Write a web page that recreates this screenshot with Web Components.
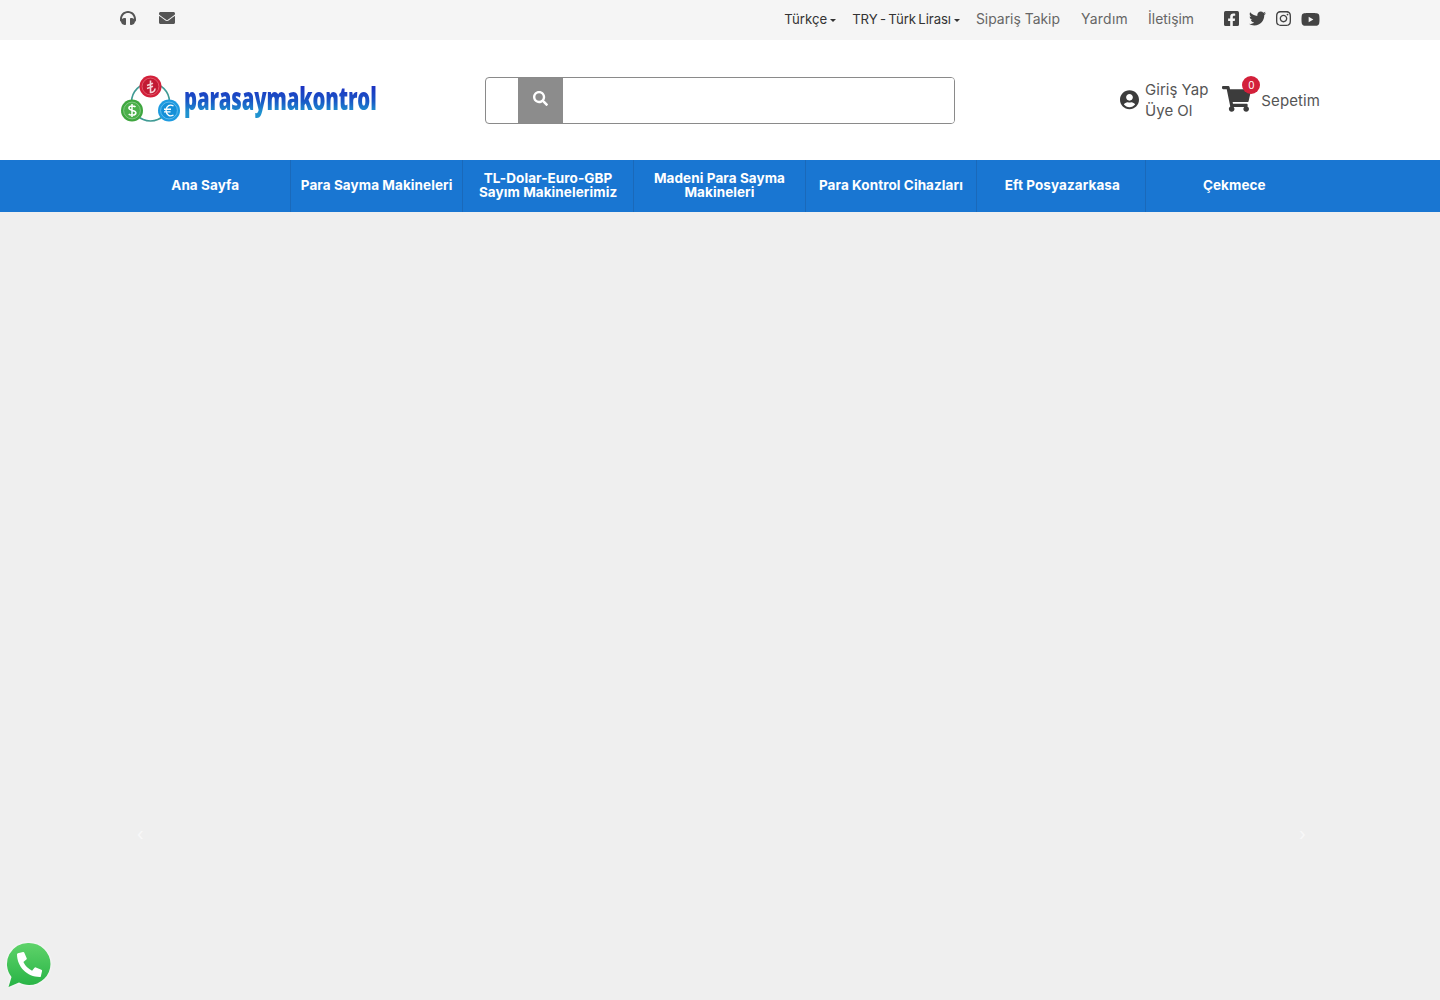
<!DOCTYPE html>
<html lang="tr"><head><meta charset="utf-8"><title>parasaymakontrol</title>
<style>
html,body{margin:0;padding:0;height:1000px;overflow:hidden;background:#efefef;font-family:Inter,"Noto Sans",sans-serif}
</style></head><body>
<site-topbar></site-topbar>
<site-header></site-header>
<site-nav></site-nav>
<site-hero></site-hero>
<whatsapp-button></whatsapp-button>
<script>
const P={
search:[512,'M505 442.7L405.3 343c-4.5-4.5-10.6-7-17-7H372c27.6-35.3 44-79.7 44-128C416 93.1 322.9 0 208 0S0 93.1 0 208s93.1 208 208 208c48.3 0 92.7-16.4 128-44v16.3c0 6.4 2.5 12.5 7 17l99.7 99.7c9.4 9.4 24.6 9.4 33.9 0l28.3-28.3c9.4-9.4 9.4-24.6.1-34zM208 336c-70.7 0-128-57.2-128-128 0-70.7 57.2-128 128-128 70.7 0 128 57.2 128 128 0 70.7-57.2 128-128 128z'],
envelope:[512,'M502.3 190.8c3.9-3.1 9.7-.2 9.7 4.7V400c0 26.5-21.5 48-48 48H48c-26.5 0-48-21.5-48-48V195.6c0-5 5.7-7.8 9.7-4.7 22.4 17.4 52.1 39.5 154.1 113.6 21.1 15.4 56.7 47.8 92.2 47.6 35.7.3 72-32.8 92.3-47.6 102-74.1 131.6-96.3 154-113.7zM256 320c23.2.4 56.6-29.2 73.4-41.4 132.7-96.3 142.8-104.7 173.4-128.7 5.8-4.5 9.2-11.5 9.2-18.9v-19c0-26.5-21.5-48-48-48H48C21.5 64 0 85.5 0 112v19c0 7.4 3.4 14.3 9.2 18.9 30.6 23.9 40.7 32.4 173.4 128.7 16.8 12.2 50.2 41.8 73.4 41.4z'],
headphones:[512,'M256 32C114.52 32 0 146.496 0 288v48a32 32 0 0 0 17.689 28.622l14.383 7.191C34.083 431.903 83.421 480 144 480h24c13.255 0 24-10.745 24-24V280c0-13.255-10.745-24-24-24h-24c-31.342 0-59.671 12.879-80 33.627V288c0-105.869 86.131-192 192-192s192 86.131 192 192v1.627C427.671 268.879 399.342 256 368 256h-24c-13.255 0-24 10.745-24 24v176c0 13.255 10.745 24 24 24h24c60.579 0 109.917-48.098 111.928-108.187l14.382-7.191A32 32 0 0 0 512 336v-48c0-141.504-114.52-256-256-256z'],
user:[496,'M248 8C111 8 0 119 0 256s111 248 248 248 248-111 248-248S385 8 248 8zm0 96c48.6 0 88 39.4 88 88s-39.4 88-88 88-88-39.4-88-88 39.4-88 88-88zm0 344c-58.7 0-111.3-26.6-146.5-68.2 18.8-35.4 55.6-59.8 98.5-59.8 2.4 0 4.8.4 7.1 1.1 13 4.2 26.6 6.9 40.9 6.9 14.3 0 28-2.7 40.9-6.9 2.3-.7 4.7-1.1 7.1-1.1 42.9 0 79.7 24.4 98.5 59.8C359.3 421.4 306.7 448 248 448z'],
cart:[576,'M528.12 301.319l47.273-208C578.806 78.301 567.391 64 551.99 64H159.208l-9.166-44.81C147.758 8.021 137.93 0 126.529 0H24C10.745 0 0 10.745 0 24v16c0 13.255 10.745 24 24 24h69.883l70.248 343.435C147.325 417.1 136 435.222 136 456c0 30.928 25.072 56 56 56s56-25.072 56-56c0-15.674-6.447-29.835-16.824-40h209.647C430.447 426.165 424 440.326 424 456c0 30.928 25.072 56 56 56s56-25.072 56-56c0-22.172-12.888-41.332-31.579-50.405l5.517-24.276c3.413-15.018-8.002-29.319-23.403-29.319H218.117l-6.545-32h293.145c11.206 0 20.92-7.754 23.403-18.681z'],
facebook:[448,'M400 32H48A48 48 0 0 0 0 80v352a48 48 0 0 0 48 48h137.25V327.69h-63V256h63v-54.64c0-62.15 37-96.48 93.67-96.48 27.14 0 55.52 4.84 55.52 4.84v61h-31.27c-30.81 0-40.42 19.12-40.42 38.73V256h68.78l-11 71.69h-57.78V480H400a48 48 0 0 0 48-48V80a48 48 0 0 0-48-48z'],
twitter:[512,'M459.37 151.716c.325 4.548.325 9.097.325 13.645 0 138.72-105.583 298.558-298.558 298.558-59.452 0-114.68-17.219-161.137-47.106 8.447.974 16.568 1.299 25.34 1.299 49.055 0 94.213-16.568 130.274-44.832-46.132-.975-84.792-31.188-98.112-72.772 6.498.974 12.995 1.624 19.818 1.624 9.421 0 18.843-1.3 27.614-3.573-48.081-9.747-84.143-51.98-84.143-102.985v-1.299c13.969 7.797 30.214 12.67 47.431 13.319-28.264-18.843-46.781-51.005-46.781-87.391 0-19.492 5.197-37.36 14.294-52.954 51.655 63.675 129.3 105.258 216.365 109.807-1.624-7.797-2.599-15.918-2.599-24.04 0-57.828 46.782-104.934 104.934-104.934 30.213 0 57.502 12.67 76.67 33.137 23.715-4.548 46.456-13.32 66.599-25.34-7.798 24.366-24.366 44.833-46.132 57.827 21.117-2.273 41.584-8.122 60.426-16.243-14.292 20.791-32.161 39.308-52.628 54.253z'],
instagram:[448,'M224.1 141c-63.6 0-114.9 51.3-114.9 114.9s51.3 114.9 114.9 114.9S339 319.5 339 255.9 287.7 141 224.1 141zm0 189.6c-41.1 0-74.7-33.5-74.7-74.7s33.5-74.7 74.7-74.7 74.7 33.5 74.7 74.7-33.6 74.7-74.7 74.7zm146.4-194.3c0 14.9-12 26.8-26.8 26.8-14.9 0-26.8-12-26.8-26.8s12-26.8 26.8-26.8 26.8 12 26.8 26.8zm76.1 27.2c-1.7-35.9-9.9-67.7-36.2-93.9-26.2-26.2-58-34.4-93.9-36.2-37-2.1-147.9-2.1-184.9 0-35.8 1.7-67.6 9.9-93.9 36.1s-34.4 58-36.2 93.9c-2.1 37-2.1 147.9 0 184.9 1.7 35.9 9.9 67.7 36.2 93.9s58 34.4 93.9 36.2c37 2.1 147.9 2.1 184.9 0 35.9-1.7 67.7-9.9 93.9-36.2 26.2-26.2 34.4-58 36.2-93.9 2.1-37 2.1-147.8 0-184.8zM398.8 388c-7.8 19.6-22.9 34.7-42.6 42.6-29.5 11.7-99.5 9-132.1 9s-102.7 2.6-132.1-9c-19.6-7.8-34.7-22.9-42.6-42.6-11.7-29.5-9-99.5-9-132.1s-2.6-102.7 9-132.1c7.8-19.6 22.9-34.7 42.6-42.6 29.5-11.7 99.5-9 132.1-9s102.7-2.6 132.1 9c19.6 7.8 34.7 22.9 42.6 42.6 11.7 29.5 9 99.5 9 132.1s2.7 102.7-9 132.1z'],
youtube:[576,'M549.655 124.083c-6.281-23.65-24.787-42.276-48.284-48.597C458.781 64 288 64 288 64S117.22 64 74.629 75.486c-23.497 6.322-42.003 24.947-48.284 48.597-11.412 42.867-11.412 132.305-11.412 132.305s0 89.438 11.412 132.305c6.281 23.65 24.787 41.5 48.284 47.821C117.22 448 288 448 288 448s170.78 0 213.371-11.486c23.497-6.321 42.003-24.171 48.284-47.821 11.412-42.867 11.412-132.305 11.412-132.305s0-89.438-11.412-132.305zm-317.51 213.508V175.185l142.739 81.205-142.739 81.201z']
};
const ic=(n,w,c)=>`<svg width="${w}" height="${w*512/P[n][0]}" viewBox="0 0 ${P[n][0]} 512" fill="${c}" style="display:block;flex:none" aria-hidden="true"><path d="${P[n][1]}"/></svg>`;
class Base extends HTMLElement{
  connectedCallback(){ if(!this.shadowRoot){this.attachShadow({mode:'open'}).innerHTML=this.markup();} }
}
class SiteTopbar extends Base{markup(){return `<style>
:host{display:block;height:40px;background:#f5f5f5}
.w{width:1200px;margin:0 auto;height:40px;display:flex;align-items:center;font-size:13.9px;color:#666}
.l{display:flex;gap:23px;margin-top:-4px}
.r{margin-left:auto;display:flex;align-items:center}
.r>span{position:relative;top:-1px}
.d{color:#333;font-size:13.2px;display:flex;align-items:center;gap:3px;margin-right:16px}
.d.n{word-spacing:-1.2px;letter-spacing:-.1px}
.d i{width:0;height:0;border:3px solid transparent;border-top-color:#333;border-bottom:0;margin-top:2px}
.a{margin-right:20px}
.a.first{margin-right:21px}
.a.y{letter-spacing:.3px}
.s{display:flex;align-items:center;gap:10px;margin-left:10px;margin-top:-2px}
</style><div class="w"><div class="l">${ic('headphones',16,'#555')}${ic('envelope',16,'#555')}</div>
<div class="r"><span class="d">Türkçe<i></i></span><span class="d n">TRY - Türk Lirası<i></i></span><span class="a first">Sipariş Takip</span><span class="a y">Yardım</span><span class="a">İletişim</span>
<div class="s">${ic('facebook',15,'#444')}${ic('twitter',17,'#444')}${ic('instagram',15,'#444')}${ic('youtube',19,'#444')}</div></div></div>`}}
class BrandLogo extends Base{markup(){return `<style>
:host{display:flex;align-items:center;width:365px}
svg{display:block;flex:none}
.t{display:inline-block;font-family:"Open Sans",sans-serif;font-weight:800;font-size:31px;line-height:40px;letter-spacing:-.2px;transform:scaleX(.655);transform-origin:left center;white-space:nowrap;
background:linear-gradient(180deg,#1c35c2 25%,#1a58c6 58%,#1f92cf 85%);-webkit-background-clip:text;background-clip:text;color:transparent;margin-left:3px;margin-top:-5px}
</style><svg width="61" height="50" viewBox="0 0 61 50" aria-hidden="true">
<circle cx="30.500" cy="27" r="19" fill="none" stroke="#3f9a94" stroke-width="1.600"/>
<circle cx="30.500" cy="11.500" r="11" fill="#d3203a"/><circle cx="30.500" cy="11.500" r="8.400" fill="#c21a33" stroke="#e8707f" stroke-width=".7"/>
<path d="M30.500 5.500v12q4 0 4.600-4M27 10.500l6-2.200M27 13.500l6-2.200" fill="none" stroke="#f6d4d8" stroke-width="1.600"/>
<circle cx="12" cy="35.500" r="11" fill="#3fa63f"/><circle cx="12" cy="35.500" r="8.400" fill="#4bb04a" stroke="#9ad69a" stroke-width=".7"/>
<path d="M15.500 32.100c-1-1.200-6.400-2-6.600 1 0 3 7.200 1.600 7 4.800-.2 3-5.800 2.600-7.200 1M12 29v13" fill="none" stroke="#fff" stroke-width="1.500"/>
<circle cx="49" cy="35.500" r="11" fill="#1e9be0"/><circle cx="49" cy="35.500" r="8.400" fill="#1590d8" stroke="#7cc8f0" stroke-width=".7"/>
<path d="M53.500 31c-3.500-2-7-.5-7.500 4.500.5 5 4 6.500 7.500 4.500M44 34.300h7M44 36.900h6.500" fill="none" stroke="#fff" stroke-width="1.400"/>
</svg><span class="t">parasaymakontrol</span>`}}
class SearchBox extends Base{markup(){return `<style>
:host{display:flex;width:468px;height:45px;border:1px solid #8a8a8a;border-radius:4px;background:#fff;overflow:hidden}
.sel{width:32px}.b{width:45px;background:#8c8c8c;display:flex;align-items:center;justify-content:center}
.b svg{margin-top:-3px}
input{flex:1;border:0;outline:0;background:#fff;min-width:0}
</style><div class="sel"></div><div class="b">${ic('search',15,'#fff')}</div><input type="text" aria-label="Ara">`}}
class HeaderActions extends Base{markup(){return `<style>
:host{display:flex;align-items:center;margin-left:auto;font-size:15px;color:#555}
.u{display:flex;align-items:center;gap:6px}
.u div{display:flex;flex-direction:column;line-height:21px}
.c{position:relative;display:flex;align-items:center;gap:10px;margin-left:14px}
.c svg{margin-top:-2px}
.c .l{letter-spacing:.1px;margin-top:1px}
.bd{position:absolute;left:20px;top:-12px;width:18px;height:18px;border-radius:50%;background:#d3203a;color:#fff;font-size:10px;line-height:18px;text-align:center}
</style><div class="u">${ic('user',19,'#3c3c3c')}<div><span>Giriş Yap</span><span>Üye Ol</span></div></div>
<div class="c">${ic('cart',29,'#3c3c3c')}<span class="bd">0</span><span class="l">Sepetim</span></div>`}}
class SiteHeader extends Base{markup(){return `<style>
:host{display:block;height:120px;background:#fff}
.w{width:1200px;height:120px;margin:0 auto;display:flex;align-items:center}
</style><div class="w"><brand-logo></brand-logo><search-box></search-box><header-actions></header-actions></div>`}}
class SiteNav extends Base{markup(){
const items=['Ana Sayfa','Para Sayma Makineleri','TL-Dolar-Euro-GBP<br>Sayım Makinelerimiz','Madeni Para Sayma<br>Makineleri','Para Kontrol Cihazları','Eft Posyazarkasa','Çekmece'];
return `<style>
:host{display:block;height:52px;background:#1976d2;box-shadow:0 1px 0 #dfe8f2}
.w{width:1200px;height:52px;margin:0 auto;display:grid;grid-template-columns:repeat(7,1fr)}
a{display:flex;align-items:center;justify-content:center;text-align:center;color:#fff;font-weight:700;font-size:13.5px;line-height:14px;letter-spacing:.08px;border-right:1px solid #1a69ba;box-sizing:border-box;white-space:nowrap;padding-bottom:2px}
a:nth-child(6){margin-right:3px;padding-left:3px}
a:last-child{border-right:0}
</style><div class="w">${items.map(t=>`<a>${t}</a>`).join('')}</div>`}}
class SiteHero extends Base{markup(){return `<style>
:host{display:block;height:788px;background:#efefef;position:relative}
.a{position:absolute;top:611px;color:#f8f8f8;font-size:20px;line-height:20px;font-family:"Liberation Sans",sans-serif}
</style><span class="a" style="left:137px">‹</span><span class="a" style="left:1299px">›</span>`}}
class WhatsappButton extends Base{markup(){return `<style>
:host{display:block;position:fixed;left:7px;top:943px;width:44px;height:44px}
svg{display:block;overflow:visible;filter:drop-shadow(0 0 1.500px #fff)}
</style><svg width="44" height="44" viewBox="0 0 44 44" aria-hidden="true">
<defs><linearGradient id="g" x1="0" y1="0" x2="0" y2="1"><stop offset="0" stop-color="#5fd36a"/><stop offset="1" stop-color="#27b345"/></linearGradient></defs>
<path d="M22 0a21.500 21 0 0 1 0 42c-3.500 0-7-.9-10-2.400L1.500 44l3-10A21 21 0 0 1 22 0z" fill="url(#g)"/>
<path transform="translate(10 9) scale(.049)" fill="#fff" d="M497.39 361.8l-112-48a24 24 0 0 0-28 6.9l-49.6 60.6A370.66 370.66 0 0 1 130.6 204.11l60.6-49.6a23.94 23.94 0 0 0 6.9-28l-48-112A24.16 24.16 0 0 0 122.6.61l-104 24A24 24 0 0 0 0 48c0 256.5 207.9 464 464 464a24 24 0 0 0 23.4-18.6l24-104a24.29 24.29 0 0 0-14.01-27.6z"/>
</svg>`}}
customElements.define('site-topbar',SiteTopbar);
customElements.define('brand-logo',BrandLogo);
customElements.define('search-box',SearchBox);
customElements.define('header-actions',HeaderActions);
customElements.define('site-header',SiteHeader);
customElements.define('site-nav',SiteNav);
customElements.define('site-hero',SiteHero);
customElements.define('whatsapp-button',WhatsappButton);
</script>
</body></html>
